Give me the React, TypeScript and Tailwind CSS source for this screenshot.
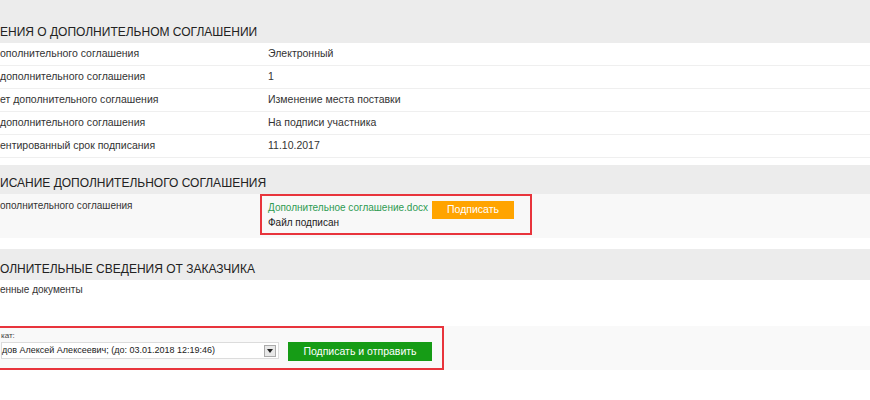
const rows = [
  { label: "ополнительного соглашения", value: "Электронный" },
  { label: "дополнительного соглашения", value: "1" },
  { label: "ет дополнительного соглашения", value: "Изменение места поставки" },
  { label: "дополнительного соглашения", value: "На подписи участника" },
  { label: "ентированный срок подписания", value: "11.10.2017" },
];

function SectionHeader({ title, height }: { title: string; height: string }) {
  return (
    <div className={`flex items-end bg-[#ececec] pb-[3px] ${height}`}>
      <h2 className="text-[12px] leading-[15px] text-[#222]">{title}</h2>
    </div>
  );
}

export default function App() {
  return (
    <div className="h-[400px] w-[870px] overflow-hidden bg-white font-['Liberation_Sans',Arial,sans-serif] text-[#333]">
      <SectionHeader title="ЕНИЯ О ДОПОЛНИТЕЛЬНОМ СОГЛАШЕНИИ" height="h-[43px]" />
      <ul>
        {rows.map((row, i) => (
          <li
            key={i}
            className="flex h-[23px] items-center border-b border-[#efefef] text-[10.5px]"
          >
            <span className="w-[268px] shrink-0">{row.label}</span>
            <span>{row.value}</span>
          </li>
        ))}
      </ul>

      <div className="mt-[7px]">
        <SectionHeader title="ИСАНИЕ ДОПОЛНИТЕЛЬНОГО СОГЛАШЕНИЯ" height="h-[29px]" />
        <div className="flex h-[44px] bg-[#f8f8f8] text-[10px]">
          <p className="w-[260px] shrink-0 pt-[4px]">ополнительного соглашения</p>
          <div className="flex h-[41px] w-[272px] items-start border-2 border-[#e8343c] pl-[6px] pt-[5px]">
            <div className="flex w-[164px] flex-col gap-[2px] whitespace-nowrap">
              <a className="leading-[13px] text-[#2e9b52]">Дополнительное соглашение.docx</a>
              <span className="leading-[13px] text-[#222]">Файл подписан</span>
            </div>
            <button
              type="button"
              className="flex h-[18px] w-[82px] items-center justify-center bg-[#ffa400] text-[10.5px] text-white"
            >
              Подписать
            </button>
          </div>
        </div>
      </div>

      <div className="mt-[11px]">
        <SectionHeader title="ОЛНИТЕЛЬНЫЕ СВЕДЕНИЯ ОТ ЗАКАЗЧИКА" height="h-[31px]" />
        <p className="pt-[3px] text-[10px] leading-[13px]">енные документы</p>
      </div>

      <div className="mt-[30px] flex h-[44px] bg-[#f9f9f9]">
        <div className="-ml-[4px] flex h-[44px] w-[448px] items-start border-2 border-[#e8343c] pl-[3px] pt-[3px]">
          <div className="flex w-[287px] flex-col">
            <span className="text-[8px] leading-[9px] text-[#444]">кат:</span>
            <div className="mt-[2px] flex h-[17px] w-[278px] items-center justify-between border border-[#dcdcdc] bg-white pr-[2px]">
              <span className="text-[9px] text-[#222]">
                дов Алексей Алексеевич; (до: 03.01.2018 12:19:46)
              </span>
              <span className="flex h-[12px] w-[12px] items-center justify-center border border-[#aaa] bg-[#e8e8e8]">
                <svg width="6" height="4" viewBox="0 0 6 4">
                  <path d="M0 0h6L3 4z" fill="#222" />
                </svg>
              </span>
            </div>
          </div>
          <button
            type="button"
            className="mt-[11px] flex h-[19px] w-[144px] items-center justify-center bg-[#169c16] text-[10.5px] text-white"
          >
            Подписать и отправить
          </button>
        </div>
      </div>
    </div>
  );
}
